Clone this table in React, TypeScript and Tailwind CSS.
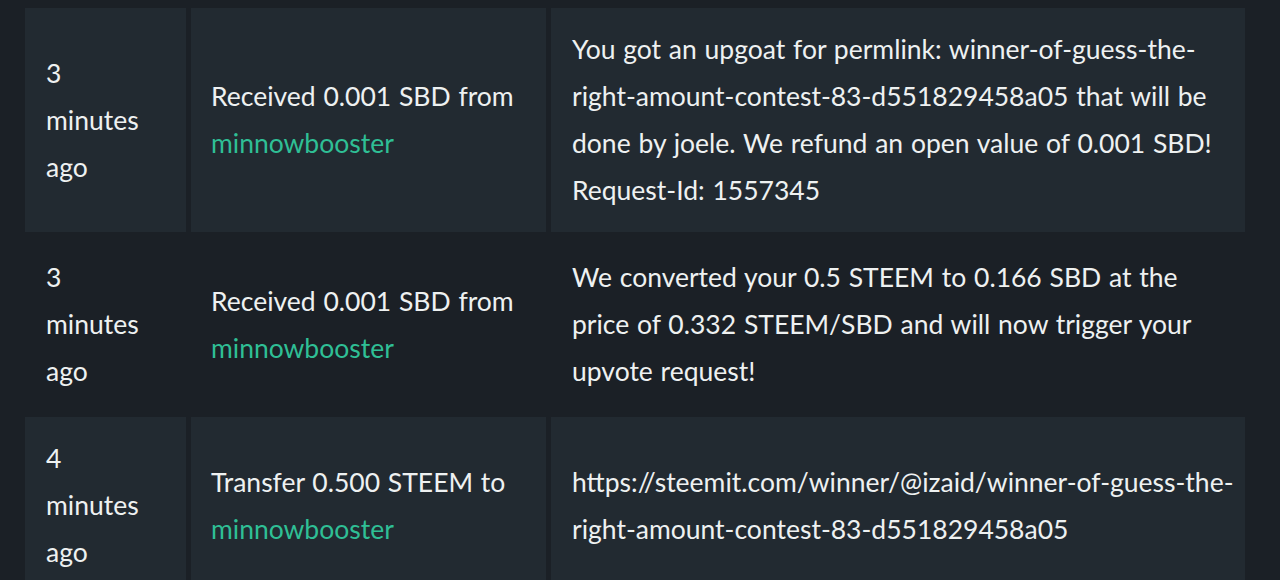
const rows = [
  {
    when: ['3', 'minutes', 'ago'],
    action: 'Received 0.001 SBD from',
    who: 'minnowbooster',
    memo: 'You got an upgoat for permlink: winner-of-guess-the-right-amount-contest-83-d551829458a05 that will be done by joele. We refund an open value of 0.001 SBD! Request-Id: 1557345',
  },
  {
    when: ['3', 'minutes', 'ago'],
    action: 'Received 0.001 SBD from',
    who: 'minnowbooster',
    memo: 'We converted your 0.5 STEEM to 0.166 SBD at the price of 0.332 STEEM/SBD and will now trigger your upvote request!',
  },
  {
    when: ['4', 'minutes', 'ago'],
    action: 'Transfer 0.500 STEEM to',
    who: 'minnowbooster',
    memo: 'https://steemit.com/winner/@izaid/winner-of-guess-the-right-amount-contest-83-d551829458a05',
  },
];

export default function App() {
  return (
    <div
      className="h-[580px] w-[1280px] overflow-hidden bg-[#1b2026] pl-[25px] pt-[8px] text-[26.5px] leading-[47px] text-[#eef1f1] [word-spacing:1px]"
      style={{ fontFamily: 'Lato, "Open Sans", sans-serif' }}
    >
      <div className="grid grid-cols-[161px_355px_694px] gap-x-[5px] gap-y-[4px]">
        {rows.map((r, i) => {
          const cell = `flex items-center py-[18px] ${i % 2 === 0 ? 'bg-[#222a31]' : ''}`;
          return (
            <div key={i} className="contents">
              <div className={`${cell} px-[21px]`}>
                <div>
                  {r.when.map((w) => (
                    <div key={w}>{w}</div>
                  ))}
                </div>
              </div>
              <div className={`${cell} pl-[20px] pr-[10px]`}>
                <div>
                  <div>{r.action}</div>
                  <a className="text-[#2fbf95]">{r.who}</a>
                </div>
              </div>
              <div className={`${cell} pl-[21px] pr-[8px]`}>
                <div className="break-words">{r.memo}</div>
              </div>
            </div>
          );
        })}
      </div>
    </div>
  );
}
